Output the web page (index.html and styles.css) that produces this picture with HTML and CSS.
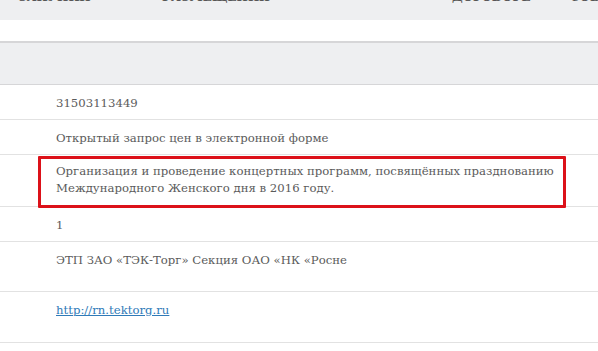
FILE: index.html
```html
<!DOCTYPE html>
<html lang="ru">
<head>
<meta charset="utf-8">
<link rel="stylesheet" href="styles.css">
</head>
<body>
<div class="head">
  <span class="h h1">ЗАКУПКИ</span>
  <span class="h h2">РАЗМЕЩЕНИЯ</span>
  <span class="h h3">ДОГОВОРЕ</span>
  <span class="h h4">СОБЫТИЯ</span>
</div>
<div class="gap"></div>
<div class="band"></div>
<div class="table">
  <div class="row r35"><div class="cell">31503113449</div></div>
  <div class="row r35"><div class="cell">Открытый запрос цен в электронной форме</div></div>
  <div class="row r52 marked"><div class="cell">Организация и проведение концертных программ, посвящённых празднованию Международного Женского дня в 2016 году.</div><div class="mark"></div></div>
  <div class="row r35"><div class="cell">1</div></div>
  <div class="row r50"><div class="cell">ЭТП ЗАО «ТЭК-Торг» Секция ОАО «НК «Росне</div></div>
  <div class="row r51"><div class="cell"><a href="#" class="link">http://rn.tektorg.ru</a></div></div>
</div>
</body>
</html>
```
FILE: styles.css
```css
html, body {
  margin: 0;
  padding: 0;
  background: #ffffff;
  font-family: "DejaVu Serif", "Liberation Serif", serif;
  color: #5b5b5b;
}
.head {
  height: 20px;
  background: #eeeff1;
  position: relative;
  overflow: hidden;
}
.h {
  position: absolute;
  bottom: 17px;
  font-size: 12px;
  font-weight: bold;
  color: #555;
  line-height: 12px;
}
.h1 { left: 18px; }
.h2 { left: 162px; }
.h3 { left: 452px; }
.h4 { left: 570px; }
.gap {
  height: 21px;
}
.band {
  height: 41px;
  background: #eeeff1;
  border-top: 2px solid #d6d6d8;
  border-bottom: 1px solid #d6d6d8;
}
.row {
  box-sizing: border-box;
  border-bottom: 1px solid #e2e2e2;
  padding: 10px 0 0 56px;
  position: relative;
}
.r35 { height: 35px; }
.r52 { height: 52px; padding-top: 8px; }
.r50 { height: 50px; }
.r51 { height: 51px; }
.cell {
  font-size: 11.7px;
  line-height: 17px;
  max-width: 510px;
}
.link {
  color: #2f7ab8;
  text-decoration: underline;
}
.mark {
  position: absolute;
  left: 38px;
  top: 1px;
  width: 528px;
  height: 52px;
  box-sizing: border-box;
  border: 3px solid #dc1119;
  border-radius: 1px;
}
```
